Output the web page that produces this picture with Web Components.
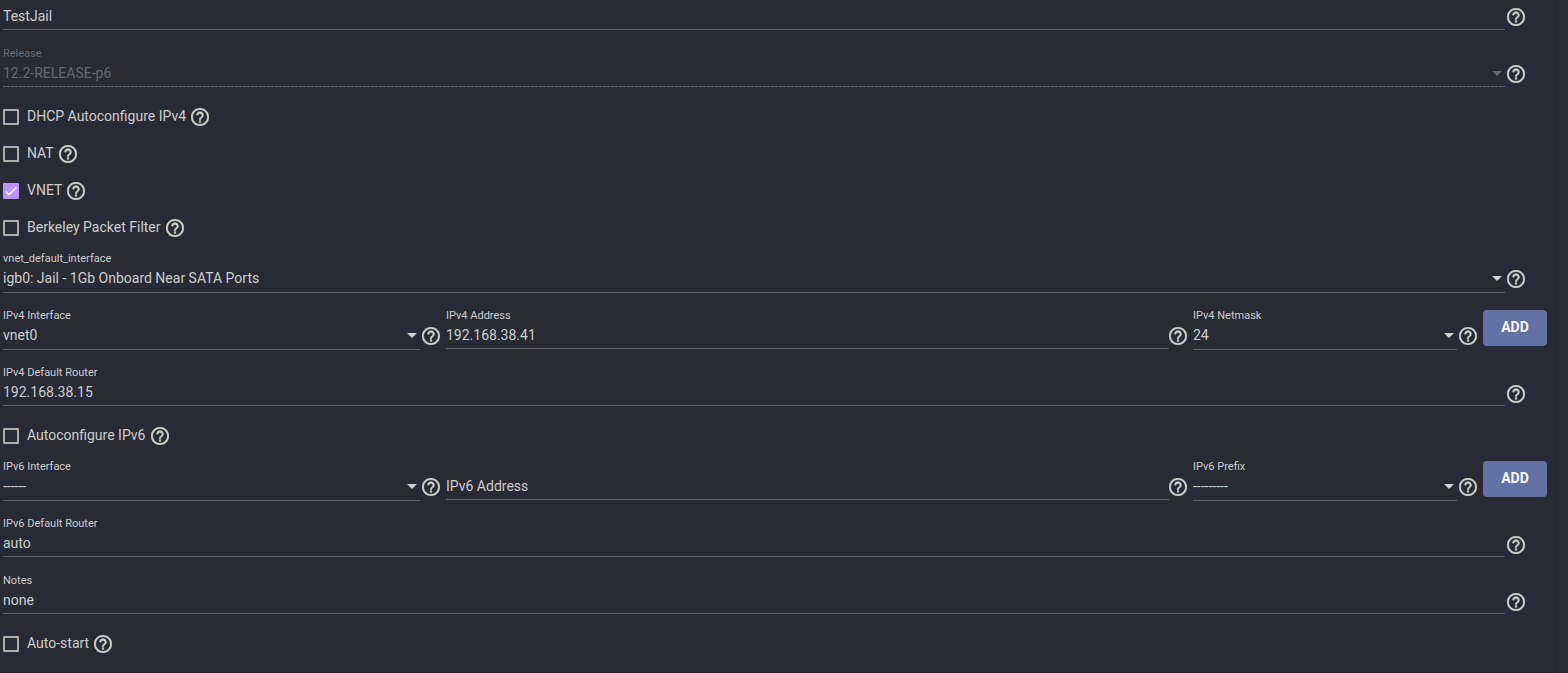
<!DOCTYPE html>
<html lang="en">
<head>
<meta charset="utf-8">
<title>Jail</title>
<style>
html { background: #282a36; }
body { margin: 0; font-family: Roboto, "Liberation Sans", sans-serif; font-size: 14px; color: #cececb; }
</style>
</head>
<body>
<jail-form></jail-form>
<script>
const define = (name, html, setup) => {
  const template = document.createElement('template');
  template.innerHTML = html;
  customElements.define(name, class extends HTMLElement {
    constructor() {
      super();
      this.attachShadow({ mode: 'open' }).append(template.content.cloneNode(true));
    }
    connectedCallback() { if (setup) setup(this, this.shadowRoot); }
  });
};

define('help-tip', `
<style>
:host { display: block; flex: none; width: 18px; height: 18px; }
button { display: block; width: 18px; height: 18px; margin: 0; padding: 0; border: 0; background: none; color: #d2d2cc; cursor: pointer; }
svg { display: block; width: 18px; height: 18px; fill: currentColor; stroke: currentColor; stroke-width: 0.3; }
</style>
<button type="button" aria-label="Help"><svg viewBox="2 2 20 20" aria-hidden="true"><path d="M11 18h2v-2h-2v2zm1-16C6.48 2 2 6.48 2 12s4.480 10 10 10 10-4.480 10-10S17.520 2 12 2zm0 18c-4.410 0-8-3.590-8-8s3.590-8 8-8 8 3.590 8 8-3.590 8-8 8zm0-14c-2.210 0-4 1.790-4 4h2c0-1.100.900-2 2-2s2 .900 2 2c0 2-3 1.750-3 5h2c0-2.250 3-2.500 3-5 0-2.210-1.790-4-4-4z"/></svg></button>`);

// Styles shared by the text field and the drop-down
const fieldStyle = `
:host { display: flex; align-items: flex-end; gap: 2px; min-width: 0; height: 57px; box-sizing: border-box; }
.field { flex: 1; min-width: 0; align-self: flex-start; padding: 15px 0 2px; border-bottom: 1px solid #63646c; }
label { display: block; height: 16px; line-height: 16px; font-size: 11px; white-space: nowrap; }
input, select { display: block; width: 100%; height: 22px; box-sizing: border-box; margin: 0; padding: 0; border: 0; border-radius: 0; outline: 0; background: none; color: inherit; font: inherit; appearance: none; }
help-tip { margin-bottom: 4px; }
`;

define('text-field', `
<style>${fieldStyle}
input::placeholder { color: inherit; opacity: 1; }
:host([tight]) { gap: 0; }
:host([tight]) help-tip { margin-bottom: 5px; }
:host([bare]) { height: 31px; }
:host([bare]) .field { padding: 5px 0 2px; }
:host([bare]) help-tip { margin-bottom: 5px; }
:host([bare]) label { display: none; }
</style>
<div class="field"><label for="control"><slot></slot></label><input id="control" type="text"></div>
<help-tip></help-tip>`, (host, root) => {
  const input = root.querySelector('input');
  input.value = host.getAttribute('value') || '';
  input.placeholder = host.getAttribute('placeholder') || '';
});

define('select-field', `
<style>${fieldStyle}
.field { padding-bottom: 3px; }
help-tip { margin-bottom: 5px; }
.box { display: grid; align-items: center; }
.box > * { grid-area: 1 / 1; }
svg { display: block; justify-self: end; width: 10px; height: 5px; margin-right: 3px; fill: #d2d2cc; pointer-events: none; }
option { background: #282a36; }
select { opacity: 1; }
:host([disabled]) .field { color: #696a6f; border-bottom: 0; background: repeating-linear-gradient(90deg, #6d6e75 0 3px, #393b45 3px 4px) bottom / 100% 1px no-repeat; }
:host([disabled]) svg { fill: #696a70; }
</style>
<div class="field"><label for="control"><slot></slot></label>
<div class="box"><select id="control"><option></option></select><svg viewBox="0 0 10 5" aria-hidden="true"><path d="M0 0h10L5 5z"/></svg></div></div>
<help-tip></help-tip>`, (host, root) => {
  root.querySelector('option').textContent = host.getAttribute('value');
  root.querySelector('select').disabled = host.hasAttribute('disabled');
});

define('check-field', `
<style>
:host { display: flex; align-items: center; height: 16px; padding-top: 21px; gap: 5px; }
label { display: flex; align-items: center; gap: 8px; line-height: 18px; white-space: nowrap; }
.text { margin-bottom: 2px; }
.box { display: grid; width: 16px; height: 16px; }
.box > * { grid-area: 1 / 1; }
input { appearance: none; width: 16px; height: 16px; margin: 0; border: 2px solid #aeaea8; border-radius: 1px; box-sizing: border-box; }
input:checked { border: 0; background: #bd93f9; }
svg { display: none; width: 16px; height: 16px; pointer-events: none; }
input:checked + svg { display: block; }
</style>
<label><span class="box"><input type="checkbox"><svg viewBox="0 0 24 24" fill="none" stroke="#f4f2f2" stroke-width="2.400" aria-hidden="true"><path d="M4.100 12.700 9 17.600 20.300 6.300"/></svg></span><span class="text"><slot></slot></span></label>
<help-tip></help-tip>`, (host, root) => {
  root.querySelector('input').checked = host.hasAttribute('checked');
});

define('add-button', `
<style>
:host { display: block; padding-top: 17px; }
button { display: block; width: 64px; height: 36px; margin: 0; padding: 0 0 2px; border: 0; border-radius: 4px; background: #6272a4; color: #f8f8f2; font: 700 14px Roboto, "Liberation Sans", sans-serif; cursor: pointer; }
</style>
<button type="button"><slot></slot></button>`);

define('field-row', `
<style>
:host { display: grid; grid-template-columns: 437fr 741fr 284fr 64px; gap: 6px; height: 57px; }
</style>
<slot></slot>`);

define('jail-form', `
<style>
:host { display: block; margin-right: 12px; border-right: 1px solid #242631; border-bottom: 1px solid #1f212b; }
form { padding: 0 8px 20px 3px; }
.full { margin-right: 22px; }
</style>
<form>
<text-field class="full" bare value="TestJail">Name</text-field>
<select-field class="full" disabled value="12.2-RELEASE-p6">Release</select-field>
<check-field>DHCP Autoconfigure IPv4</check-field>
<check-field>NAT</check-field>
<check-field checked>VNET</check-field>
<check-field>Berkeley Packet Filter</check-field>
<select-field class="full" value="igb0: Jail - 1Gb Onboard Near SATA Ports">vnet_default_interface</select-field>
<field-row>
<select-field value="vnet0">IPv4 Interface</select-field>
<text-field tight value="192.168.38.41">IPv4 Address</text-field>
<select-field value="24">IPv4 Netmask</select-field>
<add-button>ADD</add-button>
</field-row>
<text-field class="full" value="192.168.38.15">IPv4 Default Router</text-field>
<check-field>Autoconfigure IPv6</check-field>
<field-row>
<select-field value="------">IPv6 Interface</select-field>
<text-field tight placeholder="IPv6 Address"></text-field>
<select-field value="---------">IPv6 Prefix</select-field>
<add-button>ADD</add-button>
</field-row>
<text-field class="full" value="auto">IPv6 Default Router</text-field>
<text-field class="full" value="none">Notes</text-field>
<check-field>Auto-start</check-field>
</form>`);
</script>
</body>
</html>
